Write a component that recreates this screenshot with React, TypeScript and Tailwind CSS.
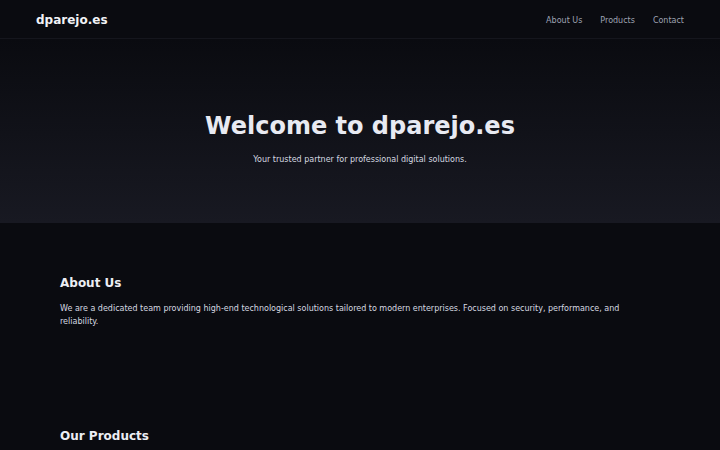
export default function App() {
  return (
    <div className="min-h-screen bg-[#0a0b10] font-['DejaVu_Sans',sans-serif] text-[#e5e7eb]">
      <header className="flex items-center justify-between border-b border-[#15161d] px-[36px] pt-[12px] pb-[10px]">
        <a href="#" className="text-[12px] leading-[16px] font-bold text-[#f1f2f6]">
          dparejo.es
        </a>
        <nav className="flex items-center gap-[18px] pt-[2px] text-[8px] leading-[12px] text-[#9ea3b2]">
          <a href="#about">About Us</a>
          <a href="#products">Products</a>
          <a href="#contact">Contact</a>
        </nav>
      </header>

      <section className="bg-gradient-to-b from-[#0a0b10] to-[#181922] pt-[75px] pb-[57px] text-center">
        <h1 className="text-[24px] leading-[24px] font-bold text-[#e8eaf2]">Welcome to dparejo.es</h1>
        <p className="mt-[16px] text-[8px] leading-[12px] text-[#d6d9e0]">
          Your trusted partner for professional digital solutions.
        </p>
      </section>

      <section id="about" className="mx-auto max-w-[600px] pt-[52px] pb-[50px]">
        <h2 className="mb-[11px] text-[12px] leading-[16px] font-bold text-[#eceef4]">About Us</h2>
        <p className="text-[8px] leading-[13px] text-[#d6d9e0]">
          We are a dedicated team providing high-end technological solutions tailored to modern enterprises. Focused on
          security, performance, and reliability.
        </p>
      </section>

      <section id="products" className="mx-auto max-w-[600px] py-[50px]">
        <h2 className="mb-[12px] text-[12px] leading-[16px] font-bold text-[#eceef4]">Our Products</h2>
      </section>
    </div>
  );
}
